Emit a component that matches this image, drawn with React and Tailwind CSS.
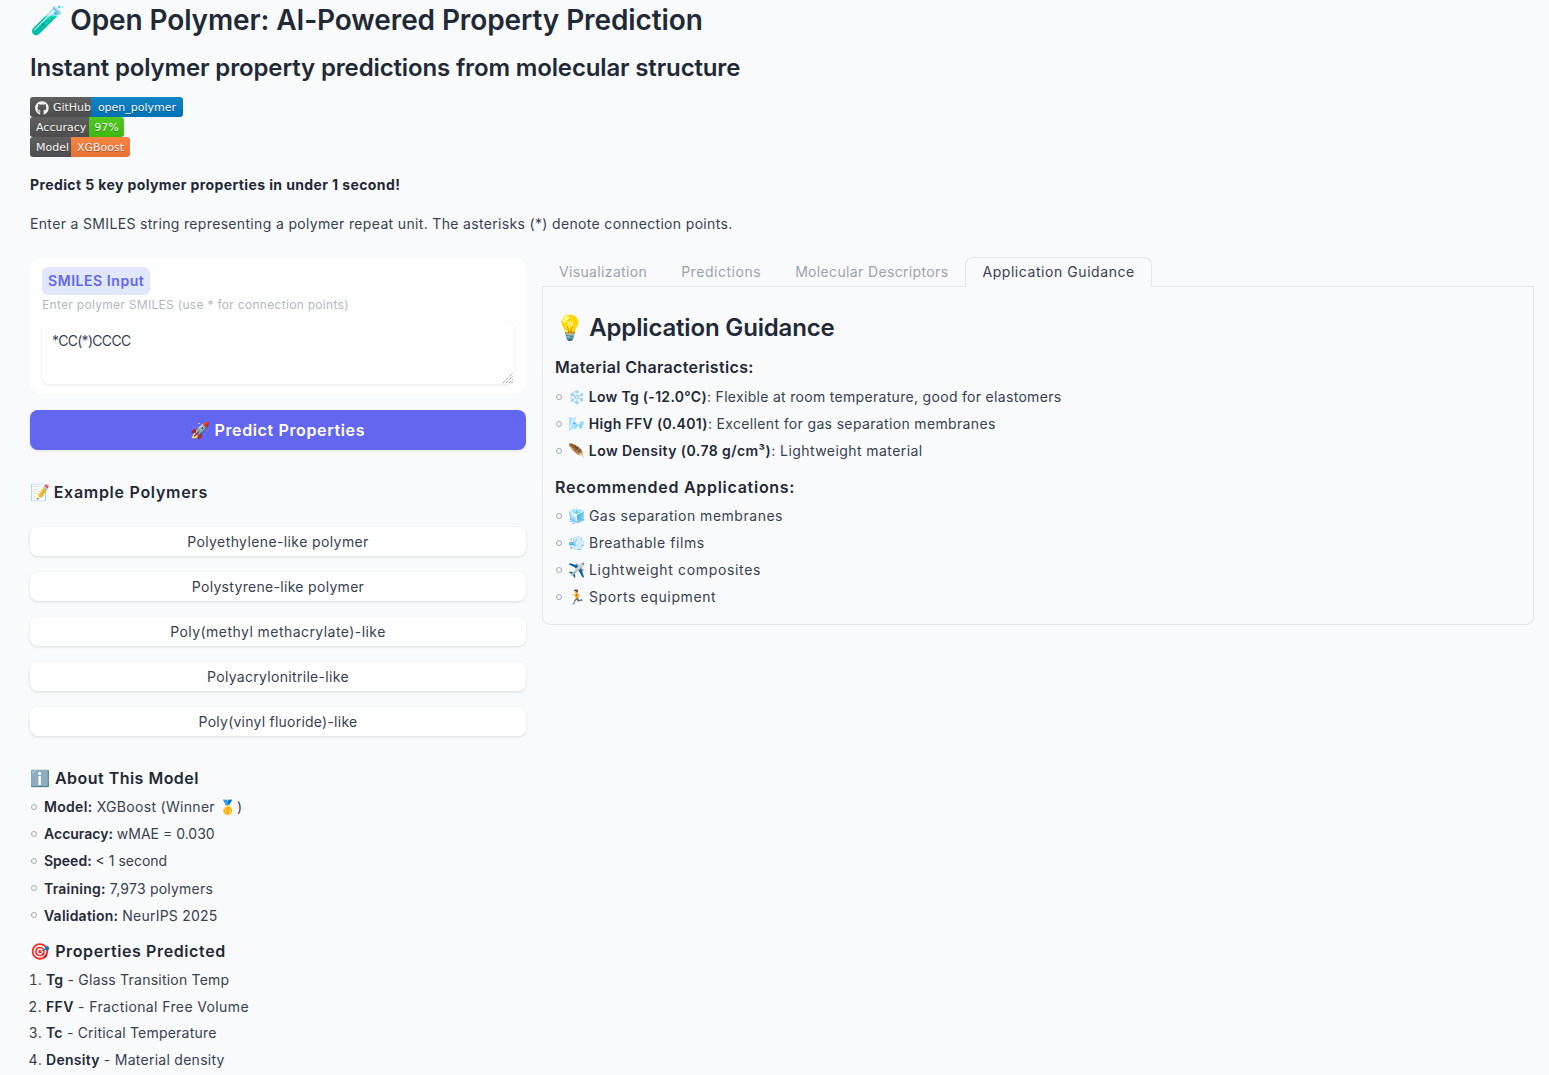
import React from "react";
import { FaGithub } from "react-icons/fa";

function Badge({ label, value, color, leftW, rightW, icon }) {
  return (
    <div className="flex h-5 w-fit overflow-hidden rounded-[3px] font-['DejaVu_Sans',sans-serif] text-[11px] leading-5 text-[#f5f5f5] [text-shadow:0_1px_0_rgba(1,1,1,0.3)]">
      <span className={`flex items-center gap-1 bg-[linear-gradient(180deg,#5f5f5f,#4d4d4d)] pl-1.5 pt-px ${leftW}`}>
        {icon}
        {label}
      </span>
      <span className={`flex items-center justify-center pt-px ${color} ${rightW}`}>{value}</span>
    </div>
  );
}

function Example({ children, t }) {
  return (
    <button className={`h-[29px] w-full rounded-lg bg-white text-center text-sm leading-[29px] text-[#374151] shadow-[0_1px_3px_rgba(0,0,0,0.12)] ${t}`}>
      {children}
    </button>
  );
}

function Bullet({ children, t = "tracking-[0.022em]", w = "w-3.5", h = "h-[27px]" }) {
  return (
    <li className={`flex items-center text-sm ${h} ${t}`}>
      <span className={`flex shrink-0 items-center pl-px ${w}`}>
        <span className="size-[6px] rounded-full border border-[#a3a8b0]" />
      </span>
      <span className="leading-[27px]">{children}</span>
    </li>
  );
}

function Num({ children, t }) {
  return <li className={`h-[26.7px] text-sm leading-[26.7px] ${t}`}>{children}</li>;
}

function Strong({ children }) {
  return <strong className="font-semibold text-[#1f2937]">{children}</strong>;
}

function E({ children }) {
  return <span className="-mr-px tracking-normal">{children}</span>;
}

function Tab({ children, active, t }) {
  return active ? (
    <div className={`-mb-px h-[30px] rounded-t-lg border border-b-0 border-[#e5e7eb] bg-[#f9fafb] px-4 text-sm leading-[28px] text-[#374151] ${t}`}>
      {children}
    </div>
  ) : (
    <div className={`h-[29px] px-[17px] text-sm leading-[29px] text-[#9ca3af] ${t}`}>{children}</div>
  );
}

export default function App() {
  return (
    <div className="h-[1075px] overflow-hidden bg-[#f9fafb] pl-[30px] pr-[15px] font-[Inter,'Noto_Color_Emoji',sans-serif] text-[#374151]">
      <h1 className="h-10 text-[28px] font-semibold leading-10 tracking-[-0.004em] text-[#1f2937]"><span className="-mr-[1.5px] tracking-normal">🧪</span> Open Polymer: AI-Powered Property Prediction</h1>
      <h2 className="mt-[11px] h-[34px] text-[24px] font-semibold leading-[34px] tracking-[-0.006em] text-[#1f2937]">Instant polymer property predictions from molecular structure</h2>
      <div className="mt-3 flex flex-col">
        <Badge label="GitHub" value="open_polymer" color="bg-[linear-gradient(180deg,#1384c5,#0071b2)]" leftW="w-[61px] pl-[5px]" rightW="w-[92px]" icon={<FaGithub className="size-[14px]" />} />
        <Badge label="Accuracy" value="97%" color="bg-[linear-gradient(180deg,#50ca22,#3db80f)]" leftW="w-[59px]" rightW="w-[35px]" />
        <Badge label="Model" value="XGBoost" color="bg-[linear-gradient(180deg,#f78344,#e57132)]" leftW="w-[41px]" rightW="w-[59px]" />
      </div>
      <p className="mt-[17px] h-[22px] text-sm font-bold leading-[22px] tracking-[0.028em] text-[#1f2937]">Predict 5 key polymer properties in under 1 second!</p>
      <p className="mt-[17px] h-[22px] text-sm leading-[22px] tracking-[0.024em]">Enter a SMILES string representing a polymer repeat unit. The asterisks (*) denote connection points.</p>

      <div className="mt-[22px] flex gap-4">
        <div className="w-[496px] shrink-0">
          <div className="h-[137px] rounded-xl bg-white px-3 pt-2.5">
            <div className="flex h-7 w-fit items-center rounded-md bg-[#e0e7ff] px-1.5 text-sm font-semibold tracking-[0.04em] text-[#6366f1]">SMILES Input</div>
            <div className="mt-0.5 h-4 text-xs leading-4 tracking-[0.025em] text-[#b4b8c0]">Enter polymer SMILES (use * for connection points)</div>
            <div className="relative mt-2">
              <textarea
                defaultValue="*CC(*)CCCC"
                className="block h-[63px] w-full resize-none rounded-lg bg-white px-2.5 py-2.5 text-sm leading-[20px] tracking-[-0.05em] text-[#374151] shadow-[0_1px_3px_rgba(0,0,0,0.1)] outline-none"
              />
              <svg className="absolute bottom-[1px] right-[1px] size-[10px]" viewBox="0 0 10 10" stroke="#777777" strokeWidth="1" strokeDasharray="1 1">
                <path d="M0 10L10 0M3 10L10 3M6 10L10 6M8.5 10L10 8.5" />
              </svg>
            </div>
          </div>
          <button className="mt-4 h-10 w-full rounded-lg bg-[#6366f1] text-base font-semibold tracking-[0.04em] text-white shadow-[0_1px_3px_rgba(0,0,0,0.1)]"><span className="-mr-px tracking-normal">🚀</span> Predict Properties</button>
          <h3 className="mt-[31px] h-[22px] text-base font-semibold leading-[22px] tracking-[0.045em] text-[#1f2937]"><span className="-mr-px tracking-normal">📝</span> Example Polymers</h3>
          <div className="mt-6 flex flex-col gap-4">
            <Example t="tracking-[0.028em]">Polyethylene-like polymer</Example>
            <Example t="tracking-[0.022em]">Polystyrene-like polymer</Example>
            <Example t="tracking-[0.032em]">Poly(methyl methacrylate)-like</Example>
            <Example t="tracking-[0.022em]">Polyacrylonitrile-like</Example>
            <Example t="tracking-[0.017em]">Poly(vinyl fluoride)-like</Example>
          </div>
          <h3 className="mt-[31px] h-[22px] text-base font-semibold leading-[22px] tracking-[0.03em] text-[#1f2937]">ℹ️ About This Model</h3>
          <ul className="mt-1">
            <Bullet h="h-[27.2px]"><Strong>Model:</Strong> XGBoost (Winner 🥇)</Bullet>
            <Bullet h="h-[27.2px]" t="tracking-[0em]"><Strong>Accuracy:</Strong> wMAE = 0.030</Bullet>
            <Bullet h="h-[27.2px]" t="tracking-[0em]"><Strong>Speed:</Strong> &lt; 1 second</Bullet>
            <Bullet h="h-[27.2px]" t="tracking-[0.016em]"><Strong>Training:</Strong> 7,973 polymers</Bullet>
            <Bullet h="h-[27.2px]" t="tracking-[0.016em]"><Strong>Validation:</Strong> NeurIPS 2025</Bullet>
          </ul>
          <h3 className="mt-[11px] h-[22px] text-base font-semibold leading-[22px] tracking-[0.038em] text-[#1f2937]">🎯 Properties Predicted</h3>
          <ol className="mt-[5px] list-decimal pl-4">
            <Num t="tracking-[0.016em]"><Strong>Tg</Strong> - Glass Transition Temp</Num>
            <Num t="tracking-[0.027em]"><Strong>FFV</Strong> - Fractional Free Volume</Num>
            <Num t="tracking-[0.015em]"><Strong>Tc</Strong> - Critical Temperature</Num>
            <Num t="tracking-[0.019em]"><Strong>Density</Strong> - Material density</Num>
          </ol>
        </div>

        <div className="min-w-0 flex-1">
          <div className="flex h-[30px] items-end border-b border-[#e5e7eb]">
            <Tab t="tracking-[0.025em]">Visualization</Tab>
            <Tab t="tracking-[0.038em]">Predictions</Tab>
            <Tab t="tracking-[0.025em]">Molecular Descriptors</Tab>
            <Tab active t="tracking-[0.04em]">Application Guidance</Tab>
          </div>
          <div className="rounded-b-lg border border-t-0 border-[#e5e7eb] px-3 pb-3.5 pt-[25px]">
            <h2 className="h-8 text-2xl font-semibold leading-8 tracking-[-0.007em] text-[#1f2937]"><span className="-mr-[1.5px] tracking-normal">💡</span> Application Guidance</h2>
            <h3 className="mt-3 h-[22px] text-base font-semibold leading-[22px] tracking-[0.022em] text-[#1f2937]">Material Characteristics:</h3>
            <ul className="mt-[5px]">
              <Bullet w="w-[13px]"><E>❄️</E> <Strong>Low Tg (-12.0°C)</Strong>: Flexible at room temperature, good for elastomers</Bullet>
              <Bullet w="w-[13px]" t="tracking-[0.025em]"><E>🌬️</E> <Strong>High FFV (0.401)</Strong>: Excellent for gas separation membranes</Bullet>
              <Bullet w="w-[13px]" t="tracking-[0.031em]"><E>🪶</E> <Strong>Low Density (0.78 g/cm³)</Strong>: Lightweight material</Bullet>
            </ul>
            <h3 className="mt-3 h-[22px] text-base font-semibold leading-[22px] tracking-[0.045em] text-[#1f2937]">Recommended Applications:</h3>
            <ul className="mt-1">
              <Bullet w="w-[13px]" t="tracking-[0.037em]"><E>🧊</E> Gas separation membranes</Bullet>
              <Bullet w="w-[13px]" t="tracking-[0.04em]"><E>💨</E> Breathable films</Bullet>
              <Bullet w="w-[13px]" t="tracking-[0.047em]"><E>✈️</E> Lightweight composites</Bullet>
              <Bullet w="w-[13px]" t="tracking-[0.044em]"><E>🏃</E> Sports equipment</Bullet>
            </ul>
          </div>
        </div>
      </div>
    </div>
  );
}
